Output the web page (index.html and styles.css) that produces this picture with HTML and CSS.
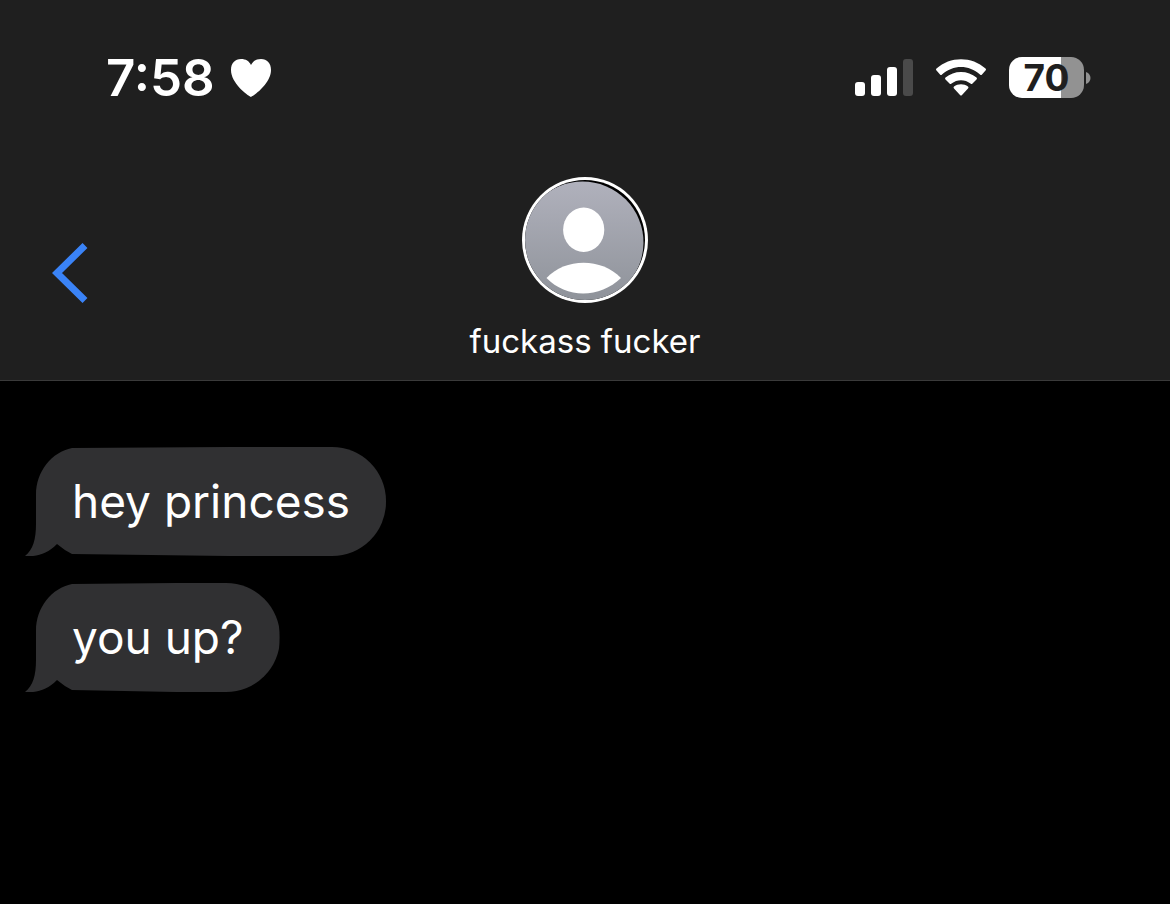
FILE: index.html
```html
<!DOCTYPE html>
<html lang="en">
<head>
<meta charset="utf-8">
<meta name="viewport" content="width=device-width, initial-scale=1">
<title>Messages</title>
<link rel="stylesheet" href="styles.css">
</head>
<body>
<header class="header">
  <div class="status">
    <div class="status-left">
      <time class="clock">7:58</time>
      <svg class="heart" viewBox="0 0 42 40" width="42" height="40" aria-hidden="true"><path d="M21 39C17 37 1 25 1 12C1 5 5 1 11 1C16 1 19 3 21 7C23 3 26 1 31 1C37 1 41 5 41 12C41 25 25 37 21 39Z"/></svg>
    </div>
    <div class="status-right">
      <svg viewBox="0 0 58 38" width="58" height="38" aria-hidden="true"><rect y="23" width="10" height="14" rx="3"/><rect x="16" y="16" width="10" height="21" rx="3"/><rect x="32" y="8" width="10" height="29" rx="3"/><rect class="dim" x="48" width="10" height="37" rx="3"/></svg>
      <svg viewBox="0 0 52 38" width="52" height="38" aria-hidden="true"><path d="M1.500 11.500Q.5 10.500 1.500 9.500C15-3 37-3 50.500 9.500Q51.500 10.500 50.500 11.500L47 15.500Q46 16.500 45 15.500C34 5.500 18 5.500 7 15.500Q6 16.500 5 15.500Z"/><path d="M10.500 20.500Q9.500 19.500 10.500 18.500C19 11 33 11 41.500 18.500Q42.500 19.500 41.500 20.500L37.500 24.500Q36.500 25.500 35.500 24.500C30 20 22 20 16.500 24.500Q15.500 25.500 14.500 24.500Z"/><path d="M19 29.500Q18 28.500 19 27.500C23 24.500 29 24.500 33 27.500Q34 28.500 33 29.500L27 36Q26 37 25 36Z"/></svg>
      <div class="power"><span class="battery">70</span><svg viewBox="0 0 5 14" width="5" height="14" aria-hidden="true"><path class="nub" d="M0 1C6 3 6 11 0 13Z"/></svg></div>
    </div>
  </div>
  <div class="nav">
    <button class="back" aria-label="Back"><svg viewBox="0 0 36 60" width="36" height="60" aria-hidden="true"><path d="M33 2.500L5 30L33 57.500"/></svg></button>
    <div class="contact">
      <svg viewBox="0 0 126 126" width="126" height="126" role="img" aria-label="Contact photo">
        <defs><linearGradient id="shade" x1="0" y1="0" x2="0" y2="1"><stop offset="0" stop-color="#b0b1bc"/><stop offset="1" stop-color="#8e9299"/></linearGradient><clipPath id="disc"><circle cx="63" cy="63" r="60"/></clipPath></defs>
        <circle cx="63" cy="63" r="63" fill="#fff"/>
        <circle cx="63" cy="63" r="60" fill="#000"/>
        <g clip-path="url(#disc)"><circle cx="60.500" cy="65.500" r="61" fill="url(#shade)"/></g>
        <ellipse cx="61.700" cy="52.700" rx="20.600" ry="22.200" fill="#fff"/>
        <path d="M24.500 101C43 80.500 80 80.500 99 101C78 121.500 44 121.500 24.500 101Z" fill="#fff"/>
      </svg>
      <h1 class="name">fuckass fucker</h1>
    </div>
  </div>
</header>
<main class="thread">
  <div class="message">
    <svg class="tail" viewBox="0 0 47 109" width="47" height="109" aria-hidden="true"><path d="M47 1C27 5 11 24 11 48V77C11 92 8 103 0 109C12 110 22 107 32 97Q39 103 47 107Z"/></svg>
    <p class="bubble">hey princess</p>
  </div>
  <div class="message">
    <svg class="tail" viewBox="0 0 47 109" width="47" height="109" aria-hidden="true"><path d="M47 1C27 5 11 24 11 48V77C11 92 8 103 0 109C12 110 22 107 32 97Q39 103 47 107Z"/></svg>
    <p class="bubble">you up?</p>
  </div>
</main>
</body>
</html>
```
FILE: styles.css
```css
* {
  box-sizing: border-box;
}

body {
  margin: 0;
  min-height: 100vh;
  background: #000;
  color: #fff;
  font-family: Inter, "Liberation Sans", sans-serif;
}

svg {
  display: block;
  flex: none;
}

.header {
  background: #1f1f1f;
  border-bottom: 1px solid #3a3a3a;
  padding-top: 47px;
}

.status {
  display: flex;
  align-items: center;
  justify-content: space-between;
  height: 61px;
  padding: 0 79px 0 106px;
}

.status-left {
  display: flex;
  align-items: center;
  gap: 15px;
}

.clock {
  font-size: 51px;
  font-weight: 600;
  line-height: 60px;
}

.heart,
.status-right svg {
  fill: #fff;
}

.status-right {
  display: flex;
  align-items: center;
  gap: 22px;
}

.status-right .dim {
  fill: #4a4a4a;
}

.power {
  display: flex;
  align-items: center;
  gap: 2px;
}

.battery {
  width: 75px;
  border-radius: 13px;
  background: linear-gradient(to right, #fff 70%, #929292 70%);
  color: #1f1f1f;
  font-size: 37px;
  font-weight: 700;
  line-height: 41px;
  text-align: center;
}

.status-right .nub {
  fill: #929292;
}

.nav {
  display: grid;
  grid-template-columns: 1fr auto 1fr;
  padding: 69px 52px 18px;
}

.back {
  align-self: start;
  justify-self: start;
  margin-top: 66px;
  padding: 0;
  border: 0;
  background: none;
  cursor: pointer;
}

.back path {
  fill: none;
  stroke: #3a83f7;
  stroke-width: 7;
}

.contact {
  display: flex;
  flex-direction: column;
  align-items: center;
  gap: 17px;
}

.name {
  margin: 0;
  font-size: 33px;
  font-weight: 400;
  line-height: 42px;
}

.thread {
  display: flex;
  flex-direction: column;
  align-items: flex-start;
  gap: 27px;
  padding: 66px 25px;
}

.message {
  display: flex;
}

.tail {
  fill: #303032;
}

.bubble {
  margin: 0;
  padding: 24px 36px 25px 0;
  border-radius: 0 54px 54px 0;
  background: #303032;
  clip-path: polygon(0 1px, 50% 0, 100% 0, 100% 100%, 50% 100%, 0 calc(100% - 2px));
  font-size: 46px;
  line-height: 60px;
}
```
